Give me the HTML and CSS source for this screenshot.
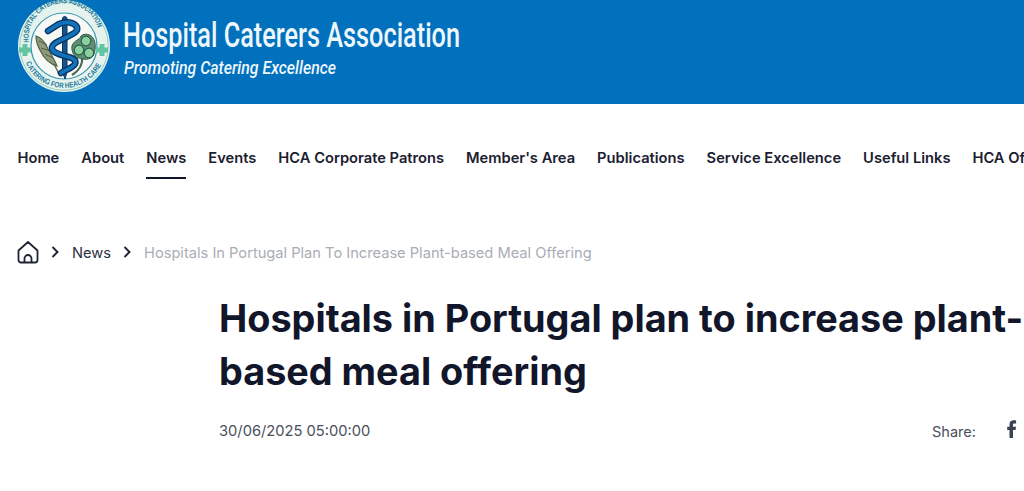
FILE: index.html
```html
<!DOCTYPE html>
<html lang="en">
<head>
<meta charset="utf-8">
<title>Hospitals in Portugal plan to increase plant-based meal offering</title>
<link rel="stylesheet" href="styles.css">
</head>
<body>
<header class="banner">
  <svg class="logo" width="640" height="104" viewBox="0 0 640 104">
    <defs>
      <path id="arcTop" d="M28.700 42.500A35.500 35.500 0 1 1 99.300 42.500"/>
      <path id="arcBot" d="M25.500 62A41.500 41.500 0 0 0 102.500 62"/>
    </defs>
    <circle cx="64" cy="46" r="46" fill="#e6f2ee"/>
    <circle cx="64" cy="46" r="44.300" fill="none" stroke="#8fcdc0" stroke-width="1"/>
    <circle cx="64" cy="46" r="33" fill="#f6f9f6" stroke="#3a9ab0" stroke-width="1.200"/>
    <text class="ring"><textPath href="#arcTop" textLength="104" lengthAdjust="spacingAndGlyphs">HOSPITAL CATERERS ASSOCIATION</textPath></text>
    <text class="ring"><textPath href="#arcBot" startOffset="1" textLength="94" lengthAdjust="spacingAndGlyphs">CATERING FOR HEALTH CARE</textPath></text>
    <path class="cross" d="M22.500 44h5v3.500H31v5h-3.500V56h-5v-3.500H19v-5h3.500z"/>
    <path class="cross" d="M99.500 44h5v3.500H108v5h-3.500V56h-5v-3.500H96v-5h3.500z"/>
    <path d="M50 56 60 76" stroke="#4e5f45" stroke-width="1.200" fill="none"/>
    <path d="M36 36c6 2 10 8 12 13 3 5 7 12 9 17-7-2-13-8-16-14-3-5-5-11-5-16z" fill="#8f9a78" stroke="#4e5f45" stroke-width="1.200"/>
    <path d="M39 41l8 4M41 48l9 3M45 54l8 4" stroke="#4e5f45" stroke-width="1" fill="none"/>
    <path d="M62.500 18c1-2 3.500-2 4.500 0v54l-2 7-2.500-7z" fill="#12558f" stroke="#0a3560" stroke-width="1"/>
    <path d="M48 31l11-7c7-3 15-2 18 3 2 5-6 8-12 11-6 3-12 5-13 9-1 5 6 7 13 9 8 2 12 4 10 8-2 4-10 6-14 9" fill="none" stroke="#0a3560" stroke-width="6.500" stroke-linecap="round"/>
    <path d="M48 31l11-7c7-3 15-2 18 3 2 5-6 8-12 11-6 3-12 5-13 9-1 5 6 7 13 9 8 2 12 4 10 8-2 4-10 6-14 9" fill="none" stroke="#1273bd" stroke-width="3.800" stroke-linecap="round"/>
    <path d="M82 57c1 7-2 13-10 18" fill="none" stroke="#4d6a55" stroke-width="2.200"/>
    <path d="M72 46c2-6 8-6 9-10 3-3 10-2 12 2 3 4 3 13 0 18-3 4-10 4-13 2-5 1-9-6-8-12z" fill="#5f8f74" stroke="#2f5a45"/>
    <g fill="#8ad0a0" stroke="#2a5e45" stroke-width="1.200">
      <circle cx="86" cy="41" r="4.800"/><circle cx="79" cy="50" r="4.800"/><circle cx="89" cy="53" r="4.800"/>
    </g>
    <text class="brand-name" x="123" y="47" textLength="337" lengthAdjust="spacingAndGlyphs">Hospital Caterers Association</text>
    <text class="brand-tag" x="124" y="74" textLength="212" lengthAdjust="spacingAndGlyphs">Promoting Catering Excellence</text>
  </svg>
</header>
<nav class="nav">
  <a class="nav-item" href="#">Home</a>
  <a class="nav-item" href="#">About</a>
  <a class="nav-item active" href="#">News</a>
  <a class="nav-item" href="#">Events</a>
  <a class="nav-item" href="#">HCA Corporate Patrons</a>
  <a class="nav-item" href="#">Member's Area</a>
  <a class="nav-item" href="#">Publications</a>
  <a class="nav-item" href="#">Service Excellence</a>
  <a class="nav-item" href="#">Useful Links</a>
  <a class="nav-item" href="#">HCA Officers</a>
</nav>
<div class="crumbs">
  <svg class="home" width="24" height="24" viewBox="0 0 24 24" fill="none" stroke="#1d2433" stroke-width="1.800" stroke-linejoin="round"><path d="M2.500 10.500 12 2l9.500 8.500V20a2.500 2.500 0 0 1-2.500 2.500H5A2.500 2.500 0 0 1 2.500 20z"/><path d="M8.500 22.500v-4a3.500 3.500 0 0 1 7 0v4"/></svg>
  <svg class="chev" width="8" height="12" viewBox="0 0 8 12" fill="none" stroke="#1d2433" stroke-width="1.900"><path d="M1.500 1 6.500 6l-5 5"/></svg>
  <a class="crumb" href="#">News</a>
  <svg class="chev" width="8" height="12" viewBox="0 0 8 12" fill="none" stroke="#1d2433" stroke-width="1.900"><path d="M1.500 1 6.500 6l-5 5"/></svg>
  <span class="crumb-current">Hospitals In Portugal Plan To Increase Plant-based Meal Offering</span>
</div>
<main class="article">
  <h1 class="title">Hospitals in Portugal plan to increase plant-based meal offering</h1>
  <div class="meta">
    <span class="date">30/06/2025 05:00:00</span>
    <span class="share">Share:</span>
    <svg class="fb" width="10" height="18" viewBox="0 0 10 18"><path d="M2.500 18V10H.2V6.800h2.300V4.500C2.500 1.500 4.300.300 6.600.300c1.100 0 2.100.100 2.500.200V3.500H7.500C6.300 3.500 6 4 6 4.900v1.900h3l-.4 3.200H6v8z" fill="#3b4252"/></svg>
  </div>
</main>
</body>
</html>
```
FILE: styles.css
```css
* { box-sizing: border-box; }
html, body { margin: 0; height: 491px; overflow: hidden; background: #fff; }
body { font-family: Inter, "Liberation Sans", sans-serif; color: #12162b; }
a { color: inherit; text-decoration: none; }
.banner { height: 104px; background: #0170bd; overflow: hidden; }
.logo { display: block; }
.ring { font: 700 7.500px "Liberation Sans", sans-serif; fill: #1c7a9c; }
.cross { fill: #62c4a0; }
.brand-name { font: 500 35px Roboto, sans-serif; fill: #eef7fb; }
.brand-tag { font: italic 500 18.500px Roboto, sans-serif; fill: #eef7fb; }
.nav { display: flex; gap: 22px; padding: 0 0 0 17.500px; height: 100px; white-space: nowrap; overflow: hidden; margin-top: 35px; }
.nav-item { display: block; font-size: 14.700px; font-weight: 600; line-height: 18px; height: 40px; padding-top: 10px; color: #1b2030; flex: none; }
.active { border-bottom: 2px solid #12162b; }
.crumbs { display: flex; align-items: center; height: 26px; padding-left: 16px; font-size: 14.650px; }
.chev { margin: 0 12px; flex: none; }
.home + .chev { margin-left: 11px; margin-right: 13px; }
.crumb { color: #2a3040; padding-top: 2px; }
.crumb-current { color: #a9adb5; padding-top: 2px; margin-left: 1px; }
.article { padding: 27px 0 0 219px; }
.title { margin: 0; font-size: 37.800px; font-weight: 700; line-height: 53px; color: #12162b; width: 805px; }
.meta { display: flex; align-items: center; margin-top: 24px; font-size: 14.700px; color: #4a4f5c; }
.date { flex: none; width: 713px; }
.share { flex: none; width: 75px; font-size: 14.500px; }
.fb { margin-top: -5px; }
```
